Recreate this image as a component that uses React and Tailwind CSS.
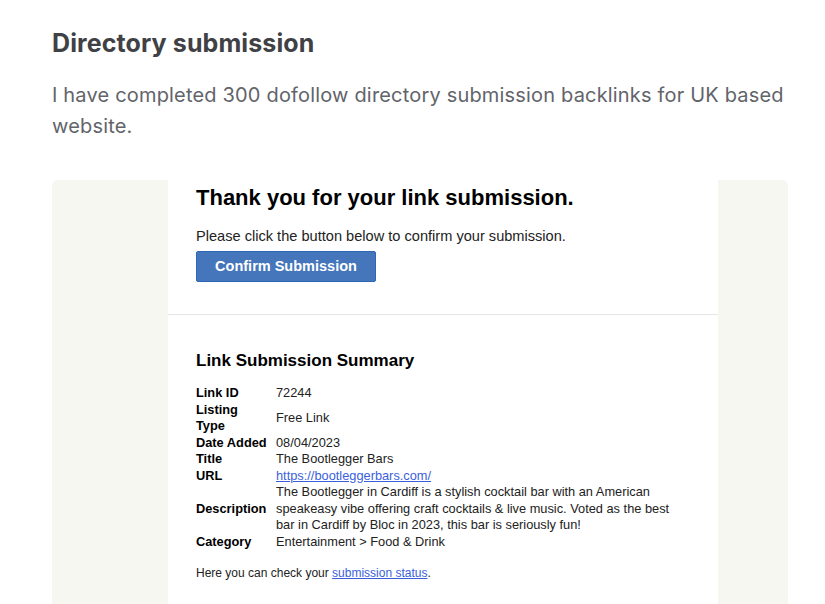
const ROWS = [
  { label: "Link ID", value: "72244" },
  { label: "Listing Type", value: "Free Link", split: true },
  { label: "Date Added", value: "08/04/2023" },
  { label: "Title", value: "The Bootlegger Bars" },
  { label: "URL", value: "https://bootleggerbars.com/", link: true },
  {
    label: "Description",
    value:
      "The Bootlegger in Cardiff is a stylish cocktail bar with an American speakeasy vibe offering craft cocktails & live music. Voted as the best bar in Cardiff by Bloc in 2023, this bar is seriously fun!",
  },
  { label: "Category", value: "Entertainment > Food & Drink" },
];

export default function App() {
  return (
    <div className="h-[604px] w-[825px] overflow-hidden bg-white font-['Inter','Noto_Sans',sans-serif]">
      <div className="pl-[52px] pr-[37px] pt-[27px]">
        <h1 className="text-[25px] font-bold leading-[32px] tracking-[0.1px] text-[#404145]">
          Directory submission
        </h1>
        <p className="mt-[21px] text-[20px] leading-[31px] tracking-[0.18px] text-[#62646a]">
          I have completed 300 dofollow directory submission backlinks for UK based website.
        </p>

        <div className="mt-[38px] flex h-[440px] rounded-[5px] bg-[#f7f7f2] pl-[116px]">
          <div className="w-[550px] bg-white font-['Liberation_Sans',Arial,sans-serif] text-[#111]">
            <div className="px-[28px] pt-[7px]">
              <h2 className="text-[22px] font-bold leading-[22px] text-black">
                Thank you for your link submission.
              </h2>
              <p className="mt-[19px] text-[14.6px] leading-[16px] text-[#222]">
                Please click the button below to confirm your submission.
              </p>
              <button className="mt-[7px] h-[31px] w-[180px] rounded-[2px] border border-[#2c66b5] bg-[#4576bc] text-[14.5px] font-bold text-white">
                Confirm Submission
              </button>
            </div>
            <div className="mt-[32px] h-px bg-[#e6e6e6]" />
            <div className="px-[28px] pt-[36px]">
              <h3 className="text-[17px] font-bold leading-[20px] text-black">Link Submission Summary</h3>
              <div className="mt-[14px] grid grid-cols-[76px_400px] items-center gap-x-[4px] text-[12.8px] leading-[16.5px]">
                {ROWS.map((r) => (
                  <div key={r.label} className="contents">
                    <div className="font-bold text-black">
                      {r.split ? (
                        <>
                          Listing
                          <br />
                          Type
                        </>
                      ) : (
                        r.label
                      )}
                    </div>
                    <div className="text-[#222]">
                      {r.link ? (
                        <a href="#" className="text-[#3b5fdc] underline">
                          {r.value}
                        </a>
                      ) : (
                        r.value
                      )}
                    </div>
                  </div>
                ))}
              </div>
              <p className="mt-[15px] text-[12px] leading-[16px] text-[#222]">
                Here you can check your{" "}
                <a href="#" className="text-[#3b5fdc] underline">
                  submission status
                </a>
                .
              </p>
            </div>
          </div>
        </div>
      </div>
    </div>
  );
}
